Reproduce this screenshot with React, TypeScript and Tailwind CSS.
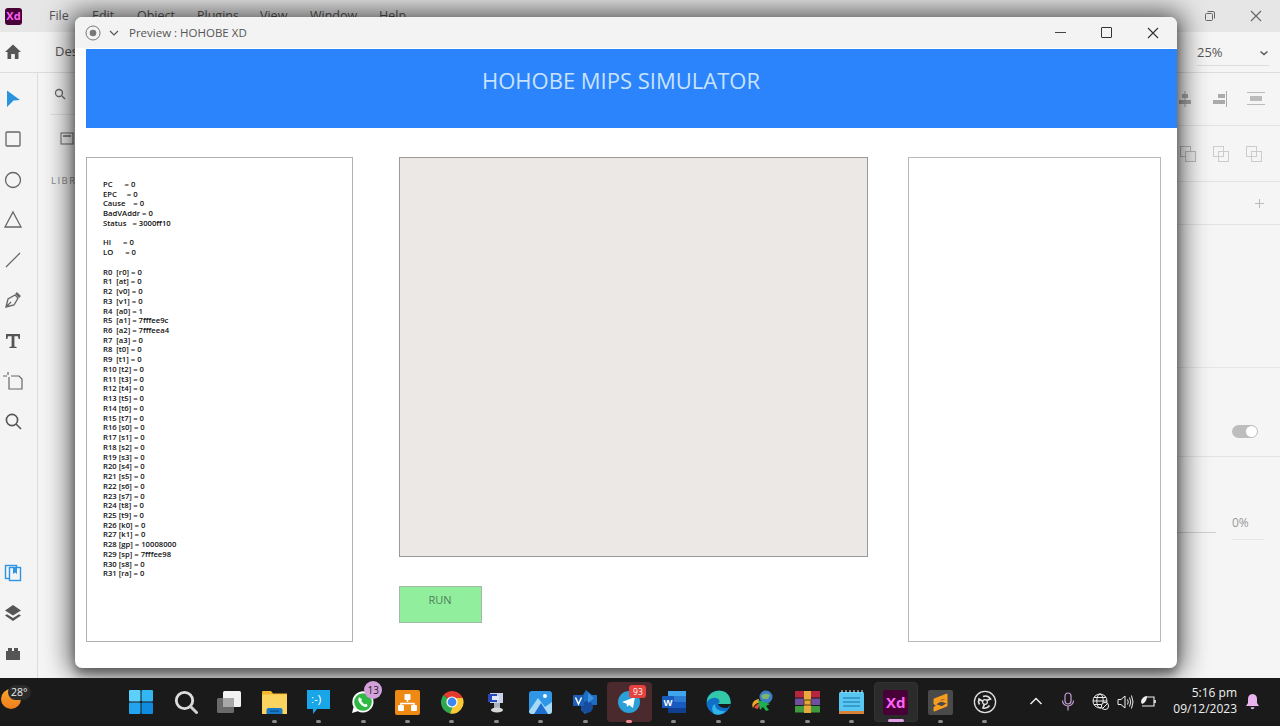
const registers = `PC      = 0
EPC     = 0
Cause    = 0
BadVAddr = 0
Status   = 3000ff10

HI      = 0
LO      = 0

R0  [r0] = 0
R1  [at] = 0
R2  [v0] = 0
R3  [v1] = 0
R4  [a0] = 1
R5  [a1] = 7fffee9c
R6  [a2] = 7fffeea4
R7  [a3] = 0
R8  [t0] = 0
R9  [t1] = 0
R10 [t2] = 0
R11 [t3] = 0
R12 [t4] = 0
R13 [t5] = 0
R14 [t6] = 0
R15 [t7] = 0
R16 [s0] = 0
R17 [s1] = 0
R18 [s2] = 0
R19 [s3] = 0
R20 [s4] = 0
R21 [s5] = 0
R22 [s6] = 0
R23 [s7] = 0
R24 [t8] = 0
R25 [t9] = 0
R26 [k0] = 0
R27 [k1] = 0
R28 [gp] = 10008000
R29 [sp] = 7fffee98
R30 [s8] = 0
R31 [ra] = 0`;

const menus = [
  ["File", "w-[43px]"],
  ["Edit", "w-[45px]"],
  ["Object", "w-[60px]"],
  ["Plugins", "w-[63px]"],
  ["View", "w-[50px]"],
  ["Window", "w-[69px]"],
  ["Help", "w-[40px]"],
];

const Rail = () => (
  <div className="w-[38px] shrink-0 border-r border-[#dcdcdc] bg-[#f4f4f4] flex flex-col items-start pl-[3px] pt-[16px] gap-[20.3px] text-[#555]">
    <svg width="20" height="20" viewBox="0 0 20 20"><path d="M4 1.5 L17 11 L10.5 11.5 L4 18 Z" fill="#2a93e0" /></svg>
    {/* rectangle */}
    <svg width="20" height="20" viewBox="0 0 20 20" fill="none" stroke="#666" strokeWidth="1.3"><rect x="3" y="3" width="14" height="14" rx="1" /></svg>
    <svg width="20" height="20" viewBox="0 0 20 20" fill="none" stroke="#666" strokeWidth="1.3"><circle cx="10" cy="10" r="7.5" /></svg>
    <svg width="20" height="20" viewBox="0 0 20 20" fill="none" stroke="#666" strokeWidth="1.3"><path d="M10 2 L18 17 H2 Z" /></svg>
    <svg width="20" height="20" viewBox="0 0 20 20" fill="none" stroke="#666" strokeWidth="1.2"><path d="M3 17 L17 3" /></svg>
    <svg width="20" height="20" viewBox="0 0 20 20" fill="none" stroke="#666" strokeWidth="1.3"><path d="M3 17 L5 9 L12 5 L15 8 L11 15 Z M3 17 L8 12" /><path d="M13 3 L17 7" strokeWidth="2.5" /></svg>
    <svg width="20" height="20" viewBox="0 0 20 20" fill="#555"><path d="M3 3 H17 V8 H15.6 L15 5.3 H11.4 V15.5 L13.6 16 V17 H6.4 V16 L8.6 15.5 V5.3 H5 L4.4 8 H3 Z" /></svg>
    <svg width="20" height="20" viewBox="0 0 20 20" fill="none" stroke="#666" strokeWidth="1.2"><path d="M6 6 V18 H19 V8 L16 5 H8" /><path d="M0 5 H4 M5 1 V4" /></svg>
    <svg width="20" height="20" viewBox="0 0 20 20" fill="none" stroke="#555" strokeWidth="1.6"><circle cx="9" cy="9" r="5.6" /><path d="M13 13 L18 18" /></svg>
    <div className="mt-[111px] flex flex-col items-start gap-[20px]">
      <svg width="20" height="20" viewBox="0 0 20 20" fill="none" stroke="#2d95e5" strokeWidth="1.4"><rect x="2.5" y="2.5" width="11" height="13" /><rect x="6.5" y="4.5" width="11" height="13" fill="#f4f4f4" /><path d="M10 5 H14 V11 L12 9.5 L10 11 Z" fill="#2d95e5" stroke="none" /></svg>
      <svg width="20" height="20" viewBox="0 0 20 20" fill="#555"><path d="M10 2 L18 7.5 L10 12.5 L2 7.5 Z" /><path d="M4 11.2 L10 15 L16 11.2 L18 12.6 L10 18 L2 12.6 Z" /></svg>
      <svg width="20" height="20" viewBox="0 0 20 20" fill="#555"><path d="M3 8 H5 V5 H9 V8 H11 V5 H15 V8 H17 V17 H3 Z" /></svg>
    </div>
  </div>
);

// XD app sitting behind the preview window
const XdApp = () => (
  <div className="flex-1 flex flex-col min-h-0 bg-[#f5f5f5]">
    <div className="h-[32px] shrink-0 bg-[#e6e6e6] flex items-center text-[#555] text-[12.5px]">
      <div className="w-[49px] flex justify-start pl-[5px]">
        <div className="w-[17px] h-[17px] rounded-[3px] bg-[#470137] text-[#ff61f6] text-[11px] font-bold flex items-center justify-center">Xd</div>
      </div>
      {menus.map(([m, w]) => (
        <span key={m} className={w}>{m}</span>
      ))}
      <div className="ml-auto flex items-center gap-[32px] pr-[17px]">
        <svg width="14" height="14" viewBox="0 0 14 14" fill="none" stroke="#666"><rect x="2.5" y="4.5" width="7" height="7" rx="1" /><path d="M4.5 2.5 H10 Q11.5 2.5 11.5 4 V9.5" /></svg>
        <svg width="14" height="14" viewBox="0 0 14 14" fill="none" stroke="#666" strokeWidth="1.1"><path d="M2 2 L12 12 M12 2 L2 12" /></svg>
      </div>
    </div>
    <div className="h-[41px] shrink-0 border-b border-[#dddddd] flex items-center text-[#555] text-[13px]">
      <div className="w-[38px] flex justify-start pl-[4px]">
        <svg width="18" height="18" viewBox="0 0 18 18" fill="#555"><path d="M9 1.5 L17 9 H14.5 V16 H10.8 V11 H7.2 V16 H3.5 V9 H1 Z" /></svg>
      </div>
      <span className="ml-[17px]">Des</span>
      <div className="ml-auto w-[83px] flex items-center">
        <div className="w-[72px] flex items-center justify-between border-b border-[#dddddd] pb-[3px] mt-[5px]">
          <span>25%</span>
          <svg width="10" height="10" viewBox="0 0 10 10" fill="none" stroke="#555" strokeWidth="1.4"><path d="M1.5 3.5 L5 6.5 L8.5 3.5" /></svg>
        </div>
      </div>
    </div>
    <div className="flex-1 flex min-h-0">
      <Rail />
      <div className="w-[65px] shrink-0 flex flex-col text-[#888]">
        <div className="h-[42px] ml-[12px] border-b border-[#e2e2e2] flex items-center pl-[4px]">
          <svg width="12" height="12" viewBox="0 0 12 12" fill="none" stroke="#666" strokeWidth="1.3"><circle cx="5" cy="5" r="3.5" /><path d="M8 8 L11 11" /></svg>
        </div>
        <div className="mt-[17px] ml-[22px]">
          <svg width="14" height="13" viewBox="0 0 14 13" fill="none" stroke="#666"><rect x="1" y="1" width="12" height="11" /><path d="M3 4 H11" strokeWidth="1.5" /></svg>
        </div>
        <span className="mt-[29px] ml-[13px] text-[9.5px] tracking-[1.5px]">LIBR</span>
      </div>
      <div className="flex-1" />
      {/* right inspector */}
      <div className="w-[103px] shrink-0 flex flex-col">
        <div className="h-[53px] shrink-0 border-b border-[#e2e2e2] flex items-center justify-end gap-[19px] pr-[15px]">
          <svg width="16" height="16" viewBox="0 0 16 16" fill="#aaa"><rect x="7.5" y="0" width="1" height="16" /><rect x="5" y="3" width="6" height="4" /><rect x="2" y="9" width="12" height="4" /></svg>
          <svg width="16" height="16" viewBox="0 0 16 16" fill="#aaa"><rect x="14" y="0" width="1" height="16" /><rect x="6" y="3" width="7" height="4" /><rect x="1" y="9" width="12" height="4" /></svg>
          <svg width="18" height="16" viewBox="0 0 18 16" fill="#bbb"><rect x="0" y="1" width="18" height="1" /><rect x="0" y="13" width="18" height="1" /><rect x="3" y="5" width="12" height="5" /></svg>
        </div>
        <div className="h-[56px] shrink-0 border-b border-[#e2e2e2] flex items-center justify-end gap-[17px] pr-[18px]">
          <svg width="16" height="16" viewBox="0 0 16 16" fill="none" stroke="#bbb"><rect x="0.5" y="0.5" width="10" height="10" /><rect x="5.5" y="5.5" width="10" height="10" fill="#eee" /></svg>
          <svg width="16" height="16" viewBox="0 0 16 16" fill="none" stroke="#ccc"><rect x="0.5" y="0.5" width="10" height="10" /><rect x="5.5" y="5.5" width="10" height="10" /></svg>
          <svg width="16" height="16" viewBox="0 0 16 16" fill="none" stroke="#ccc"><rect x="0.5" y="0.5" width="10" height="10" /><rect x="5.5" y="5.5" width="10" height="10" /></svg>
        </div>
        <div className="h-[43px] shrink-0 border-b border-[#e2e2e2] flex items-center justify-end pr-[15px]">
          <svg width="11" height="11" viewBox="0 0 11 11" stroke="#bbb"><path d="M5.5 1 V10 M1 5.5 H10" /></svg>
        </div>
        <div className="h-[143px] shrink-0 border-b border-[#e6e6e6]" />
        <div className="h-[89px] shrink-0 border-b border-[#e2e2e2] flex items-center justify-end pr-[22px] pt-[39px]">
          <div className="w-[26px] h-[13px] rounded-full bg-[#bdbdbd] flex items-center justify-end pr-[1px]">
            <div className="w-[11px] h-[11px] rounded-full bg-white" />
          </div>
        </div>
        <div className="flex items-start mt-[57px]">
          <div className="w-[39px] h-[1px] bg-[#d0d0d0] mt-[18px]" />
          <div className="ml-[16px] w-[32px] border-b border-[#e6e6e6] pb-[7px] text-[12px] text-[#999]">0%</div>
        </div>
      </div>
    </div>
  </div>
);

const PreviewWindow = () => (
  <div className="absolute left-[75px] top-[17px] w-[1102px] h-[651px] rounded-[7px] overflow-hidden bg-white flex flex-col shadow-[0_0_26px_6px_rgba(0,0,0,0.6),0_6px_10px_rgba(0,0,0,0.35)]">
    <div className="h-[31px] shrink-0 bg-[#f3f3f3] flex items-center text-[11.5px] text-[#555] pl-[10px]">
      <svg width="16" height="16" viewBox="0 0 16 16" fill="none"><circle cx="8" cy="8" r="7" stroke="#777" /><circle cx="8" cy="8" r="3.3" fill="#777" /></svg>
      <svg className="ml-[8px]" width="10" height="10" viewBox="0 0 10 10" fill="none" stroke="#555" strokeWidth="1.2"><path d="M1 3 L5 7 L9 3" /></svg>
      <span className="ml-[10px]">Preview : HOHOBE XD</span>
      <div className="ml-auto flex items-center gap-[35px] pr-[18px]">
        <div className="w-[11px] h-[1px] bg-[#444]" />
        <div className="w-[11px] h-[11px] border border-[#333] rounded-[1px]" />
        <svg width="12" height="12" viewBox="0 0 12 12" stroke="#333" strokeWidth="1.1"><path d="M1 1 L11 11 M11 1 L1 11" /></svg>
      </div>
    </div>
    <div className="ml-[11px] flex-1 flex flex-col min-h-0">
      <div className="h-[79px] shrink-0 mt-[1px] bg-[#2b84fb] flex items-center pl-[396px] text-[22px] text-[#c9e3ff] pb-[16px]">HOHOBE MIPS SIMULATOR</div>
      <div className="mt-[29px] flex items-start">
        <div className="w-[267px] h-[485px] shrink-0 border border-[#b0b0b0] pl-[16px] pt-[22px]">
          <pre className="text-[7.7px] leading-[9.74px] font-semibold text-[#111] font-[Open_Sans,sans-serif] whitespace-pre">{registers}</pre>
        </div>
        <div className="ml-[46px] w-[469px] shrink-0 flex flex-col">
          <div className="h-[400px] bg-[#ebe8e6] border border-[#9a9a9a]" />
          <div className="mt-[29px] w-[83px] h-[37px] bg-[#90ee9c] border border-[#a3b8a6] flex justify-center pt-[5px] text-[11px] leading-[15px] text-[#4f7f58] pr-[1px]">RUN</div>
        </div>
        <div className="ml-[40px] w-[253px] h-[485px] shrink-0 border border-[#b8b8b8]" />
      </div>
    </div>
  </div>
);

const Dot = ({ active }: { active?: boolean }) =>
  active ? <div className="w-[6px] h-[3px] rounded-full bg-[#f08a92]" /> : <div className="w-[5px] h-[3px] rounded-full bg-[#8b8b8b]" />;

const Cell = ({ children, dot, box }: { children: React.ReactNode; dot?: boolean; box?: string }) => (
  <div className={`relative w-[44.4px] h-[40px] shrink-0 rounded-[4px] flex items-center justify-center ${box ?? ""}`}>
    {children}
    {dot && (
      <div className="absolute bottom-[-1px] left-0 right-0 flex justify-center">
        <Dot />
      </div>
    )}
  </div>
);

const Taskbar = () => (
  <div className="h-[48px] shrink-0 bg-[#1a1a1a] flex items-center text-[#eee] relative">
    {/* weather */}
    <div className="relative w-[119px] h-full shrink-0">
      <div className="absolute left-[1px] top-[11px] w-[20px] h-[20px] rounded-full bg-gradient-to-b from-[#f6a52c] to-[#ef7d1c]" />
      <div className="absolute left-[8px] top-[7px] px-[3px] h-[15px] rounded-full bg-[#2b2b2b] text-[10.5px] leading-[15px]">28°</div>
    </div>
    <Cell>
      <svg width="24" height="24" viewBox="0 0 24 24"><rect x="0" y="0" width="11.5" height="11.5" rx="1" fill="#5ad0fb" /><rect x="12.5" y="0" width="11.5" height="11.5" rx="1" fill="#33b6f3" /><rect x="0" y="12.5" width="11.5" height="11.5" rx="1" fill="#22a5ee" /><rect x="12.5" y="12.5" width="11.5" height="11.5" rx="1" fill="#0f8be0" /></svg>
    </Cell>
    <Cell>
      <svg width="24" height="24" viewBox="0 0 24 24" fill="none"><circle cx="10.5" cy="10.5" r="8.2" stroke="#dcdcdc" strokeWidth="2.8" /><path d="M16.5 16.5 L22.5 22.5" stroke="#cfcfcf" strokeWidth="3" strokeLinecap="round" /></svg>
    </Cell>
    <Cell>
      <svg width="26" height="24" viewBox="0 0 26 24"><rect x="0" y="8" width="17" height="15" rx="1.5" fill="#6a6a6a" /><rect x="6" y="1" width="18" height="16" rx="1.5" fill="#f2f2f2" /><rect x="6" y="8" width="11" height="9" fill="#a8a8a8" /></svg>
    </Cell>
    <Cell dot>
      <svg width="25" height="24" viewBox="0 0 25 24"><path d="M0 2 Q0 1 1 1 H9 L11 3.5 H25 V24 H0 Z" fill="#f3b92b" /><rect x="0" y="4.5" width="25" height="19.5" rx="1" fill="#fbd35f" /><path d="M4.5 24 V20 Q4.5 18 6.5 18 H18.5 Q20.5 18 20.5 20 V24 Z" fill="#1679c9" /><rect x="8" y="20.5" width="9" height="1.3" fill="#0d4f8b" /></svg>
    </Cell>
    <Cell dot>
      <svg width="25" height="26" viewBox="0 0 25 26"><path d="M1 1 H24 V20 H11 L7 25 V20 H1 Z" fill="#18a6e8" /><text x="5" y="14" fontSize="11" fill="#fff" fontFamily="Liberation Sans, sans-serif">:-)</text></svg>
    </Cell>
    <Cell dot>
      <div className="relative w-[24px] h-[24px]">
        <svg width="24" height="24" viewBox="0 0 24 24"><path d="M1 23 L2.6 17 A10.6 10.6 0 1 1 6.8 21.2 Z" fill="#fff" /><circle cx="12" cy="12" r="8.8" fill="#2fb844" /><path d="M8.2 7.2 C6.5 9 7.5 12 10 14.5 C12.5 17 15 17.6 16.6 16 L15.5 13.8 L13.7 14.4 C12.2 13.6 11 12.3 10.3 10.8 L11 9.2 Z" fill="#fff" /></svg>
        <div className="absolute left-[13px] top-[-9px] w-[18px] h-[18px] rounded-full bg-[#d3a0dc] text-[#222] text-[10px] leading-[18px] text-center">13</div>
      </div>
    </Cell>
    <Cell dot>
      <svg width="25" height="25" viewBox="0 0 25 25"><rect width="25" height="25" rx="2" fill="#ee8a14" /><path d="M12.5 7 V12 M6 18 V13.5 H19 V18" stroke="#fff" strokeWidth="1.6" fill="none" /><rect x="9.5" y="4" width="6" height="6" rx="1" fill="#fff" /><rect x="3" y="15" width="6" height="6" rx="1" fill="#fff" /><rect x="16" y="15" width="6" height="6" rx="1" fill="#fff" /></svg>
    </Cell>
    <Cell dot>
      <svg width="24" height="24" viewBox="0 0 24 24"><path d="M12 12 L3.5 5 A11.5 11.5 0 0 1 22.8 8 H12 Z" fill="#e33b2e" /><path d="M12 12 L12 8 H22.8 A11.5 11.5 0 0 1 10 23.4 Z" fill="#fcc934" /><path d="M3.5 5 A11.5 11.5 0 0 0 10 23.4 L14 14 Z" fill="#2fa84f" /><circle cx="12" cy="12" r="5.6" fill="#fff" /><circle cx="12" cy="12" r="4.4" fill="#3f86ef" /></svg>
    </Cell>
    <Cell dot>
      <svg width="18" height="22" viewBox="0 0 18 22"><rect x="3" y="2" width="13" height="10" fill="#c9d2e6" /><rect x="1" y="3" width="9" height="8" fill="#2a49b8" /><rect x="5" y="5" width="7" height="4" fill="#dfe7fb" /><rect x="7" y="12" width="6" height="5" fill="#aab0bb" /><ellipse cx="10" cy="19" rx="6" ry="2.4" fill="#d7d7d7" /></svg>
    </Cell>
    <Cell dot>
      <svg width="23" height="23" viewBox="0 0 23 23"><rect width="23" height="23" rx="3" fill="#2f97e6" /><path d="M0 20 L9 7 L16 16 L23 11 V20 Q23 23 20 23 H3 Q0 23 0 20 Z" fill="#a7daf7" /><path d="M5 23 L12 12 L19 23 Z" fill="#1f6fd1" /><circle cx="16" cy="5" r="2" fill="#fff" /></svg>
    </Cell>
    <Cell dot>
      <svg width="25" height="24" viewBox="0 0 25 24"><path d="M13 0 L19 5 H24 V15 H18 V20 L12 24 L8 20 V8 Z" fill="#1b6ec2" /><circle cx="14" cy="17" r="6" fill="#174c9c" /><path d="M15 3 L21 8 L15 13 Z" fill="#3c93e0" /><rect x="0" y="5" width="11" height="11" rx="1" fill="#1c5fb8" /><path d="M2.5 7.5 L5.5 14 L8.5 7.5" stroke="#fff" strokeWidth="1.5" fill="none" /></svg>
    </Cell>
    <Cell box="bg-[#4a2a2c]">
      <div className="relative w-[22px] h-[22px]">
        <svg width="22" height="22" viewBox="0 0 22 22"><circle cx="11" cy="11" r="11" fill="#2a9fd8" /><path d="M4 11 L17 6 L15 17 L11 14 L9 16 L8.6 12.8 Z" fill="#fff" /></svg>
        <div className="absolute left-[11px] top-[-6px] w-[17px] h-[13px] rounded-[3px] bg-[#e5413e] text-white text-[8.5px] leading-[13px] text-center">93</div>
      </div>
      <div className="absolute bottom-[-1px] left-0 right-0 flex justify-center"><Dot active /></div>
    </Cell>
    <Cell dot>
      <svg width="24" height="24" viewBox="0 0 24 24"><rect x="6" y="1" width="18" height="22" rx="1.5" fill="#2b7cd3" /><rect x="6" y="12" width="18" height="6" fill="#185abd" /><rect x="6" y="18" width="18" height="5" fill="#103f91" /><rect x="6" y="1" width="18" height="5" fill="#41a5ee" /><rect x="0" y="6" width="12" height="12" rx="1" fill="#185abd" /><text x="1.5" y="15.5" fontSize="9.5" fontWeight="700" fill="#fff" fontFamily="Liberation Sans, sans-serif">W</text></svg>
    </Cell>
    <Cell dot>
      <svg width="25" height="25" viewBox="0 0 25 25"><circle cx="12.5" cy="12.5" r="12" fill="#0f6fc7" /><path d="M1 10 C3 2 12 -1 18 1.5 C23 3.5 25 9 24.6 14 H12 C16 10 11 7 7 8 C4.5 8.7 2.5 9.5 1 12 Z" fill="#33c8a8" /><path d="M9 14 C9 19 14 22 20 21 C17 24.5 12 25.5 8 24 C5 20 6 15 9 14 Z" fill="#2fb4e8" /><path d="M12 14 C13 17 17 18.5 21 18 C22.5 17 24 15.5 24.6 14 Z" fill="#1a1a1a" /></svg>
    </Cell>
    <Cell dot>
      <svg width="24" height="24" viewBox="0 0 24 24"><circle cx="15" cy="7" r="6.5" fill="#3c7fc6" /><path d="M10 6 Q14 2 19 5 L17 9 L12 9 Z" fill="#7fb56a" /><path d="M8 9 C2 10 0 14 2 18 C3 15 5 13 8 13 Z" fill="#f2a728" /><path d="M3 18 C5 14 8 13 9 14 L7 19 Z" fill="#d94b3d" /><path d="M7 10 L19 14 L15 16 L18 20 L15 21 L12 17 L9 20 Z" fill="#1fb04d" /></svg>
    </Cell>
    <Cell dot>
      <svg width="25" height="22" viewBox="0 0 25 22"><rect x="0" y="0" width="25" height="6.5" rx="0.5" fill="#b7263e" /><rect x="0" y="7.5" width="25" height="6.5" rx="0.5" fill="#6e4fa0" /><rect x="0" y="15" width="25" height="6.5" rx="0.5" fill="#3e9a3c" /><rect x="9" y="0" width="7" height="22" fill="#e7a93c" /><rect x="9" y="9" width="7" height="5" fill="none" stroke="#5c3a0c" /></svg>
    </Cell>
    <Cell dot>
      <svg width="25" height="24" viewBox="0 0 25 24"><rect x="0" y="2" width="25" height="22" rx="1.5" fill="#58c8f2" /><rect x="0" y="21" width="25" height="3" fill="#d9823a" /><path d="M4 8 H21 M4 12 H21 M4 16 H21" stroke="#1a6ea3" strokeWidth="1.2" /><path d="M3 0 V3 M7 0 V3 M11 0 V3 M15 0 V3 M19 0 V3 M23 0 V3" stroke="#d5effa" strokeWidth="1" /></svg>
    </Cell>
    <Cell box="bg-[#2b2b2b] border border-[#333]">
      <div className="w-[25px] h-[25px] rounded-[3px] bg-[#470137] text-[#ff61f6] text-[15px] font-bold flex items-center justify-center">Xd</div>
      <div className="absolute bottom-[-1px] left-0 right-0 flex justify-center"><div className="w-[16px] h-[3px] rounded-full bg-[#e29fe4]" /></div>
    </Cell>
    <Cell dot>
      <svg width="25" height="25" viewBox="0 0 25 25"><rect width="25" height="25" rx="2" fill="#4a4a4a" /><path d="M19 4 L6 9 V14 L15 17 L6 21 V17 M6 14 L19 9 V4 M19 9 V13 L10 10 M19 13 V16 L6 21" fill="#f89d1e" stroke="#f89d1e" strokeWidth="1" /></svg>
    </Cell>
    <Cell dot>
      <svg width="24" height="24" viewBox="0 0 24 24" fill="none"><circle cx="12" cy="12" r="10.6" stroke="#e0e0e0" strokeWidth="1.3" /><circle cx="12" cy="12" r="2.4" stroke="#e0e0e0" strokeWidth="1.2" /><path d="M10 6.5 A6 6 0 0 1 17.5 9 L13.5 10.5 M6.5 14.5 A6 6 0 0 1 6 9 L10 11.5 M16.5 15.5 A6 6 0 0 1 10 18 L11.5 14" stroke="#e0e0e0" strokeWidth="1.7" /></svg>
    </Cell>
    {/* tray */}
    <div className="absolute left-[1029px] top-[18px]">
      <svg width="14" height="10" viewBox="0 0 14 10" fill="none" stroke="#eee" strokeWidth="1.5"><path d="M1.5 8 L7 2.5 L12.5 8" /></svg>
    </div>
    <div className="absolute left-[1060px] top-[14px]">
      <svg width="16" height="20" viewBox="0 0 16 20" fill="none" stroke="#c79ed6" strokeWidth="1.2"><rect x="5" y="1" width="6" height="11" rx="3" /><path d="M2.5 8.5 A5.5 5.5 0 0 0 13.5 8.5 M8 14 V18.5" /></svg>
    </div>
    <div className="absolute left-[1092px] top-[15px]">
      <svg width="18" height="18" viewBox="0 0 18 18" fill="none" stroke="#eee" strokeWidth="1"><circle cx="8" cy="8" r="7" /><ellipse cx="8" cy="8" rx="3.2" ry="7" /><path d="M1 8 H15 M2 4.5 H14 M2 11.5 H10" /><circle cx="13" cy="13" r="3.6" fill="#1a1a1a" /><path d="M10.5 15.5 L15.5 10.5" /></svg>
    </div>
    <div className="absolute left-[1117px] top-[16px]">
      <svg width="17" height="16" viewBox="0 0 17 16" fill="none" stroke="#eee" strokeWidth="1"><path d="M1 5.5 H4 L8 2 V14 L4 10.5 H1 Z" /><path d="M10.5 5.5 Q12 8 10.5 10.5 M12.5 3.5 Q15 8 12.5 12.5 M14.5 1.5 Q17.5 8 14.5 14.5" /></svg>
    </div>
    <div className="absolute left-[1140px] top-[16px]">
      <svg width="17" height="16" viewBox="0 0 17 16" fill="none" stroke="#eee" strokeWidth="1.1"><path d="M6 3 H14 V12 H2" /><path d="M15 6 V9" strokeWidth="1.6" /><path d="M1 8 C1 5 4 2 7 2 C7 6 5 9 2 10 Z" fill="#eee" stroke="none" /></svg>
    </div>
    <div className="absolute right-[43px] top-[7px] text-right text-[12px] leading-[16px] text-[#f0f0f0]">
      <div>5:16 pm</div>
      <div>09/12/2023</div>
    </div>
    <div className="absolute left-[1245px] top-[15px]">
      <svg width="15" height="17" viewBox="0 0 15 17" fill="#eab3ef"><path d="M7.5 1 C4.5 1 3 3.2 3 6 V10 L1 13 H14 L12 10 V6 C12 3.2 10.5 1 7.5 1 Z" /><path d="M5.5 14.2 H9.5 Q9 16.2 7.5 16.2 Q6 16.2 5.5 14.2 Z" /></svg>
    </div>
  </div>
);

const App = () => {
  return (
    <div className="relative w-[1280px] h-[726px] overflow-hidden flex flex-col font-[Open_Sans,sans-serif]">
      <XdApp />
      <PreviewWindow />
      <Taskbar />
    </div>
  );
};

export default App;
